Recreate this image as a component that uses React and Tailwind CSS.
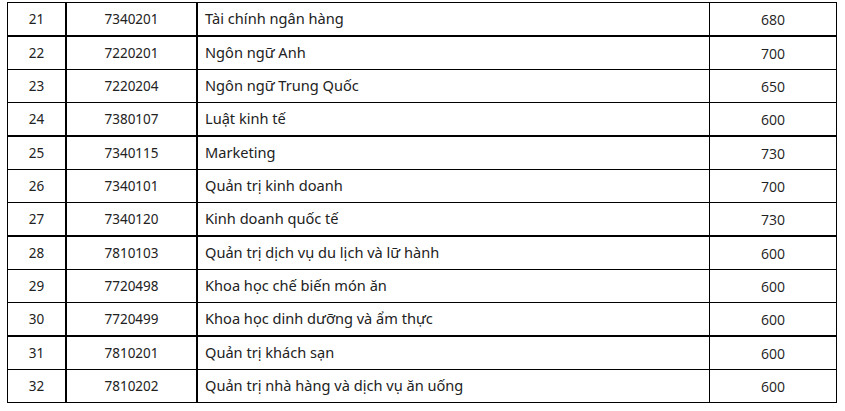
import React from "react";

const rows = [
  ["21", "7340201", "Tài chính ngân hàng", "680", true],
  ["22", "7220201", "Ngôn ngữ Anh", "700", false],
  ["23", "7220204", "Ngôn ngữ Trung Quốc", "650", false],
  ["24", "7380107", "Luật kinh tế", "600", true],
  ["25", "7340115", "Marketing", "730", false],
  ["26", "7340101", "Quản trị kinh doanh", "700", false],
  ["27", "7340120", "Kinh doanh quốc tế", "730", true],
  ["28", "7810103", "Quản trị dịch vụ du lịch và lữ hành", "600", false],
  ["29", "7720498", "Khoa học chế biến món ăn", "600", false],
  ["30", "7720499", "Khoa học dinh dưỡng và ẩm thực", "600", true],
  ["31", "7810201", "Quản trị khách sạn", "600", false],
  ["32", "7810202", "Quản trị nhà hàng và dịch vụ ăn uống", "600", false],
];

function App() {
  return (
    <div className="w-[845px] h-[411px] bg-white overflow-hidden pt-[2px] pl-[7px]">
      <div
        className="w-[830px] border-l border-t border-black text-[14px] text-[#222]"
        style={{ fontFamily: "'Noto Sans', 'Open Sans', sans-serif" }}
      >
        {rows.map(([stt, code, name, score, thick]) => (
          <div
            key={stt}
            className={
              thick
                ? "flex h-[34px] border-b-2 border-black"
                : "flex h-[33px] border-b border-black"
            }
          >
            <div className="w-[59px] shrink-0 border-r-2 border-black flex items-center justify-center text-[13.5px]">
              {stt}
            </div>
            <div className="w-[131px] shrink-0 border-r-2 border-black flex items-center justify-center text-[13.5px]">
              {code}
            </div>
            <div className="w-[512px] shrink-0 border-r border-black flex items-center pl-[7px] text-[14.6px]">
              {name}
            </div>
            <div
              className="w-[127px] shrink-0 border-r border-black flex items-center justify-center text-[14px]"
              style={{ fontFamily: "'Open Sans', sans-serif" }}
            >
              {score}
            </div>
          </div>
        ))}
      </div>
    </div>
  );
}

export default App;
